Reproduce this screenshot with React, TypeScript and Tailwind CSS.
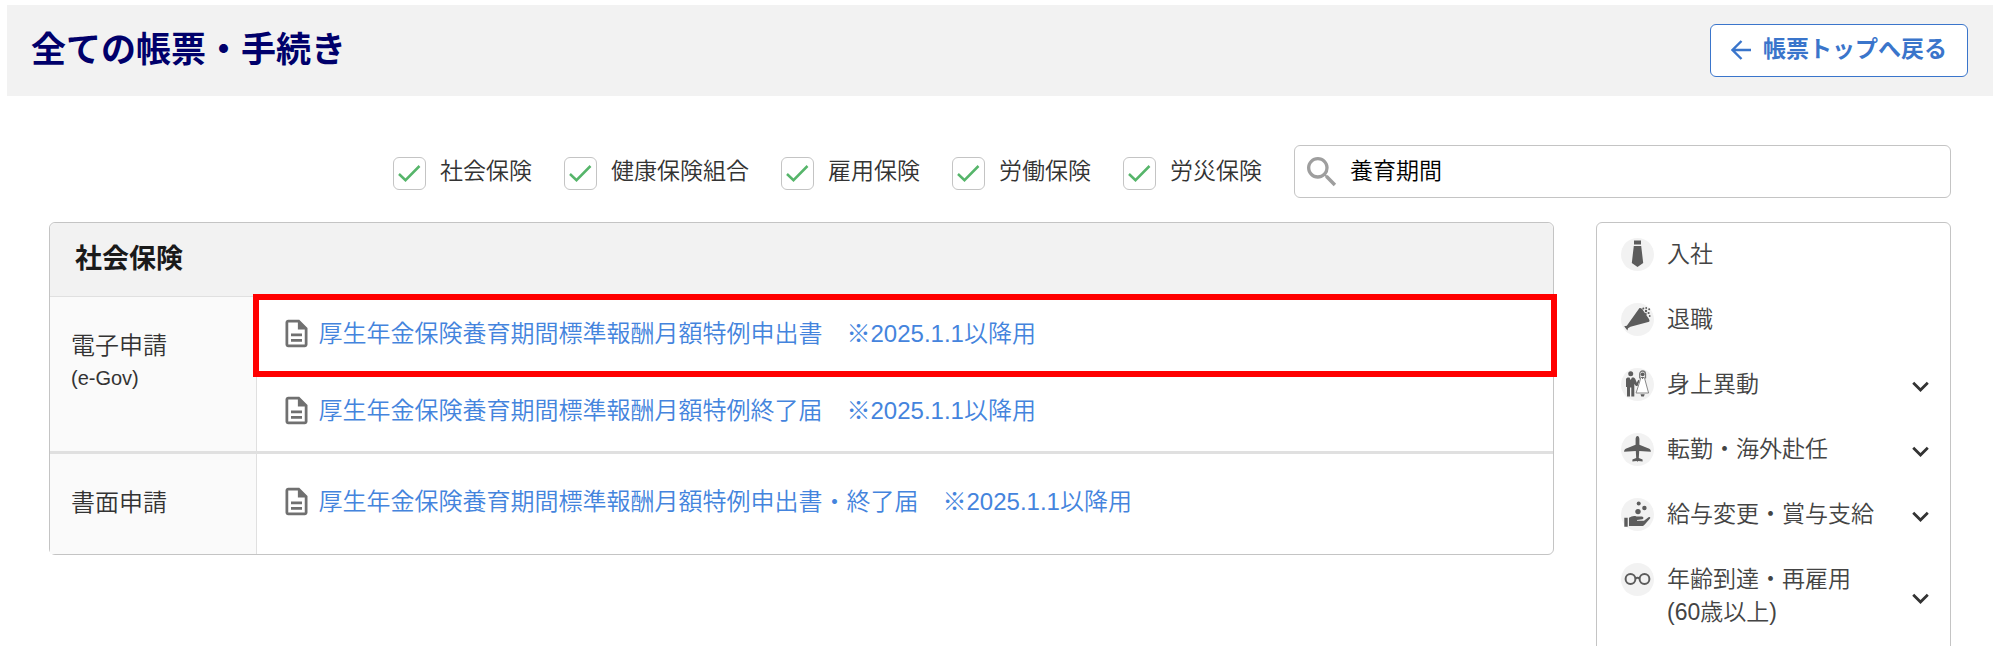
import React, { useState } from 'react';
import { MdKeyboardArrowDown, MdOutlineDescription, MdSearch } from 'react-icons/md';

const FILTERS = ['社会保険', '健康保険組合', '雇用保険', '労働保険', '労災保険'];

const ROWS = [
  {
    label: '電子申請',
    note: '(e-Gov)',
    links: [
      { text: '厚生年金保険養育期間標準報酬月額特例申出書　※2025.1.1以降用', highlighted: true },
      { text: '厚生年金保険養育期間標準報酬月額特例終了届　※2025.1.1以降用', highlighted: false },
    ],
  },
  {
    label: '書面申請',
    note: '',
    links: [
      { text: '厚生年金保険養育期間標準報酬月額特例申出書・終了届　※2025.1.1以降用', highlighted: false },
    ],
  },
];

const TieIcon = () => (
  <path d="M13 2.500h7v4h-7zM12.800 8h7.400L22.200 25l-5.700 3.900L10.800 25z" />
);

const PopperIcon = () => (
  <>
    <path d="M18.300 5.200c1.200-.8 2.900.4 3.700 2l5.800 8.600c1.200 1.800.8 3-.6 3.300L9.500 23.800 7 25.200l-.6 2.200-3.200-4.200 2.600-.4z" />
    <circle cx="22.300" cy="5.600" r="1" />
    <circle cx="25" cy="8" r="1.200" />
    <circle cx="25.200" cy="5" r=".9" />
    <circle cx="28.200" cy="6.300" r="1" />
    <circle cx="27.600" cy="10" r="1.100" />
    <circle cx="24.800" cy="11" r="1" />
    <circle cx="28.700" cy="13" r=".9" />
  </>
);

const CoupleIcon = () => (
  <>
    <circle cx="9.700" cy="5.800" r="2.500" />
    <path d="M6.500 9.500h2l1.200 2.500 1.200-2.500h2l1.300 1.200 1.600 4 1.500-3 1.200 1-2 5.300h-1.500L13.300 16v12.500h-3v-9H9v9H6V19H5v-8.300z" />
    <path d="M18.700 10.500V6.200a2.900 3.200 0 0 1 5.800 0v4.300" fill="none" stroke="#777" strokeWidth="1.300" />
    <circle cx="21.600" cy="6.300" r="1.900" />
    <path d="M19.800 9.500h3.600l1.200 4.500 3 11h-12.500l3.500-11z" fill="#fff" stroke="#888" strokeWidth="1" />
    <path d="M20.300 9.300h2.600l-1.300 2zM19.500 26.200h4.200l-.8 2.300h-2.600z" />
  </>
);

const PlaneIcon = () => (
  <path d="M16.500 3c1.200 0 1.900 1.700 1.900 3.200v5.600l9.900 3.900c1 .5 1.600 1.500 1.600 3.100l-11.700-.7-.4 6.900 3.800 1.600v1.900l-4.200-.6-.9.8-.9-.8-4.200.6v-1.900l3.800-1.600-.4-6.900-11.700.7c0-1.600.6-2.600 1.600-3.100l9.900-3.900V6.200c0-1.500.7-3.200 1.900-3.200z" />
);

const HandIcon = () => (
  <>
    <circle cx="17.700" cy="5.500" r="2" />
    <circle cx="23.400" cy="10" r="2.200" />
    <circle cx="17" cy="13.600" r="2.700" />
    <path d="M3.300 19.800h3.400v9H3.300zM8 19.700c2.500-1.600 5-2 7.500-1.300l5.500.2c1.600.1 2.100 2.200.5 2.700l-5.500.7v.8h7l4.500-3.500c1.200-.8 2.400.2 1.500 1.300l-5.500 6.200c-.7.8-1.400 1.200-2.500 1.200H8z" />
  </>
);

const GlassesIcon = () => (
  <g fill="none" stroke="#5c5c5c" strokeWidth="2">
    <circle cx="9.500" cy="16" r="4.900" />
    <circle cx="23.500" cy="16" r="4.900" />
    <path d="M14.300 15.500c1.400-1 3-1 4.400 0" />
  </g>
);

const CATEGORIES = [
  { label: '入社', note: '', Icon: TieIcon, expandable: false },
  { label: '退職', note: '', Icon: PopperIcon, expandable: false },
  { label: '身上異動', note: '', Icon: CoupleIcon, expandable: true },
  { label: '転勤・海外赴任', note: '', Icon: PlaneIcon, expandable: true },
  { label: '給与変更・賞与支給', note: '', Icon: HandIcon, expandable: true },
  { label: '年齢到達・再雇用', note: '(60歳以上)', Icon: GlassesIcon, expandable: true },
];

function FilterCheckbox({ label }: { label: string }) {
  const [checked, setChecked] = useState(true);

  return (
    <label className="flex items-center gap-[14px] cursor-pointer whitespace-nowrap">
      <span className="grid mt-1">
        <input
          type="checkbox"
          checked={checked}
          onChange={() => setChecked(!checked)}
          className="col-start-1 row-start-1 size-[33px] appearance-none rounded-md border border-[#c4c4c4] bg-white"
        />
        {checked && (
          <svg viewBox="0 0 33 33" className="col-start-1 row-start-1 size-[33px] pointer-events-none" aria-hidden="true">
            <path d="M6 17l6.500 6.200L26.500 9" fill="none" stroke="#56b56a" strokeWidth="2.500" />
          </svg>
        )}
      </span>
      {label}
    </label>
  );
}

function CategoryList() {
  return (
    <nav className="w-[355px] shrink-0 rounded-md border border-[#c4c4c4] pb-4">
      <ul>
        {CATEGORIES.map(({ label, note, Icon, expandable }) => (
          <li key={label}>
            <button type="button" className="flex w-full items-start pt-[15px] pb-[17px] pl-6 pr-[13px] text-left text-[#444]">
              <svg viewBox="0 0 33 33" className="size-[33px] shrink-0" fill="#5c5c5c" aria-hidden="true">
                <circle cx="16.500" cy="16.500" r="16.500" fill="#f2f2f2" />
                <Icon />
              </svg>
              <span className="ml-[13px] flex-1 leading-[33px]">
                {label}
                {note && <span className="block">{note}</span>}
              </span>
              {expandable && <MdKeyboardArrowDown size={33} className="mt-0.5 -mb-0.5 self-center text-[#333]" />}
            </button>
          </li>
        ))}
      </ul>
    </nav>
  );
}

export default function App() {
  const [keyword, setKeyword] = useState('養育期間');

  return (
    <div className="bg-white text-[23px] leading-[33px] font-[350] text-[#333] font-['Liberation_Sans','Noto_Sans_CJK_JP',sans-serif]">
      <div className="px-[7px] pt-[5px]">
        <header className="flex items-center justify-between bg-[#f2f2f2] py-[19px] pl-6 pr-[25px]">
          <h1 className="pb-0.5 text-[35px] leading-[48px] font-bold text-[#00006b]">全ての帳票・手続き</h1>
          <a href="#top" className="flex h-[53px] items-center gap-3 rounded-md border border-[#3a75cb] bg-white px-5 pb-0.5 font-bold text-[#3a75cb]">
            <svg viewBox="0 0 20 20" className="size-5" fill="none" stroke="currentColor" strokeWidth="2.400" aria-hidden="true">
              <path d="M10.500 1L1.500 10l9 9M1.500 10H20" />
            </svg>
            帳票トップへ戻る
          </a>
        </header>
      </div>

      <main className="px-[49px] pt-[49px]">
        <div className="flex items-center justify-end gap-8">
          {FILTERS.map((label) => (
            <FilterCheckbox key={label} label={label} />
          ))}
          <label className="flex h-[53px] w-[657px] items-center rounded-md border border-[#c4c4c4] pl-[7px]">
            <MdSearch size={40} className="shrink-0 text-[#9e9e9e]" />
            <input
              type="text"
              aria-label="帳票を検索"
              value={keyword}
              onChange={(e) => setKeyword(e.target.value)}
              className="ml-2 w-full bg-transparent text-black outline-none"
            />
          </label>
        </div>

        <div className="mt-6 flex items-start gap-[42px]">
          <section className="flex-1 rounded-md border border-[#c4c4c4]">
            <h2 className="rounded-t-md border-b border-[#e0e0e0] bg-[#f2f2f2] py-5 pl-[25px] text-[27px] font-bold text-[#1a1a1a]">
              社会保険
            </h2>
            <table className="w-full border-collapse">
              <tbody>
                {ROWS.map((row) => (
                  <tr key={row.label} className="border-t-[3px] border-[#e0e0e0] first:border-t-0">
                    <th scope="row" className="w-[206px] border-r border-[#e0e0e0] bg-[#fafafa] pl-[21px] pt-8 text-left align-top text-[24px] font-[350]">
                      {row.label}
                      {row.note && <span className="block text-[20px]">{row.note}</span>}
                    </th>
                    <td className={row.links.length > 1 ? 'p-0' : 'pt-[11px] pb-3'}>
                      {row.links.map((link) => (
                        <div key={link.text} className="relative flex h-[77px] items-center pb-1 pl-[23px]">
                          <a href="#form" className="flex items-center gap-[6px] text-[24px] text-[#4484dd]">
                            <MdOutlineDescription size={33} className="shrink-0 text-[#707070]" />
                            {link.text}
                          </a>
                          {link.highlighted && (
                            <div className="pointer-events-none absolute -inset-x-1 -inset-y-[3px] border-6 border-[#ff0000]" />
                          )}
                        </div>
                      ))}
                    </td>
                  </tr>
                ))}
              </tbody>
            </table>
          </section>

          <CategoryList />
        </div>
      </main>
    </div>
  );
}
